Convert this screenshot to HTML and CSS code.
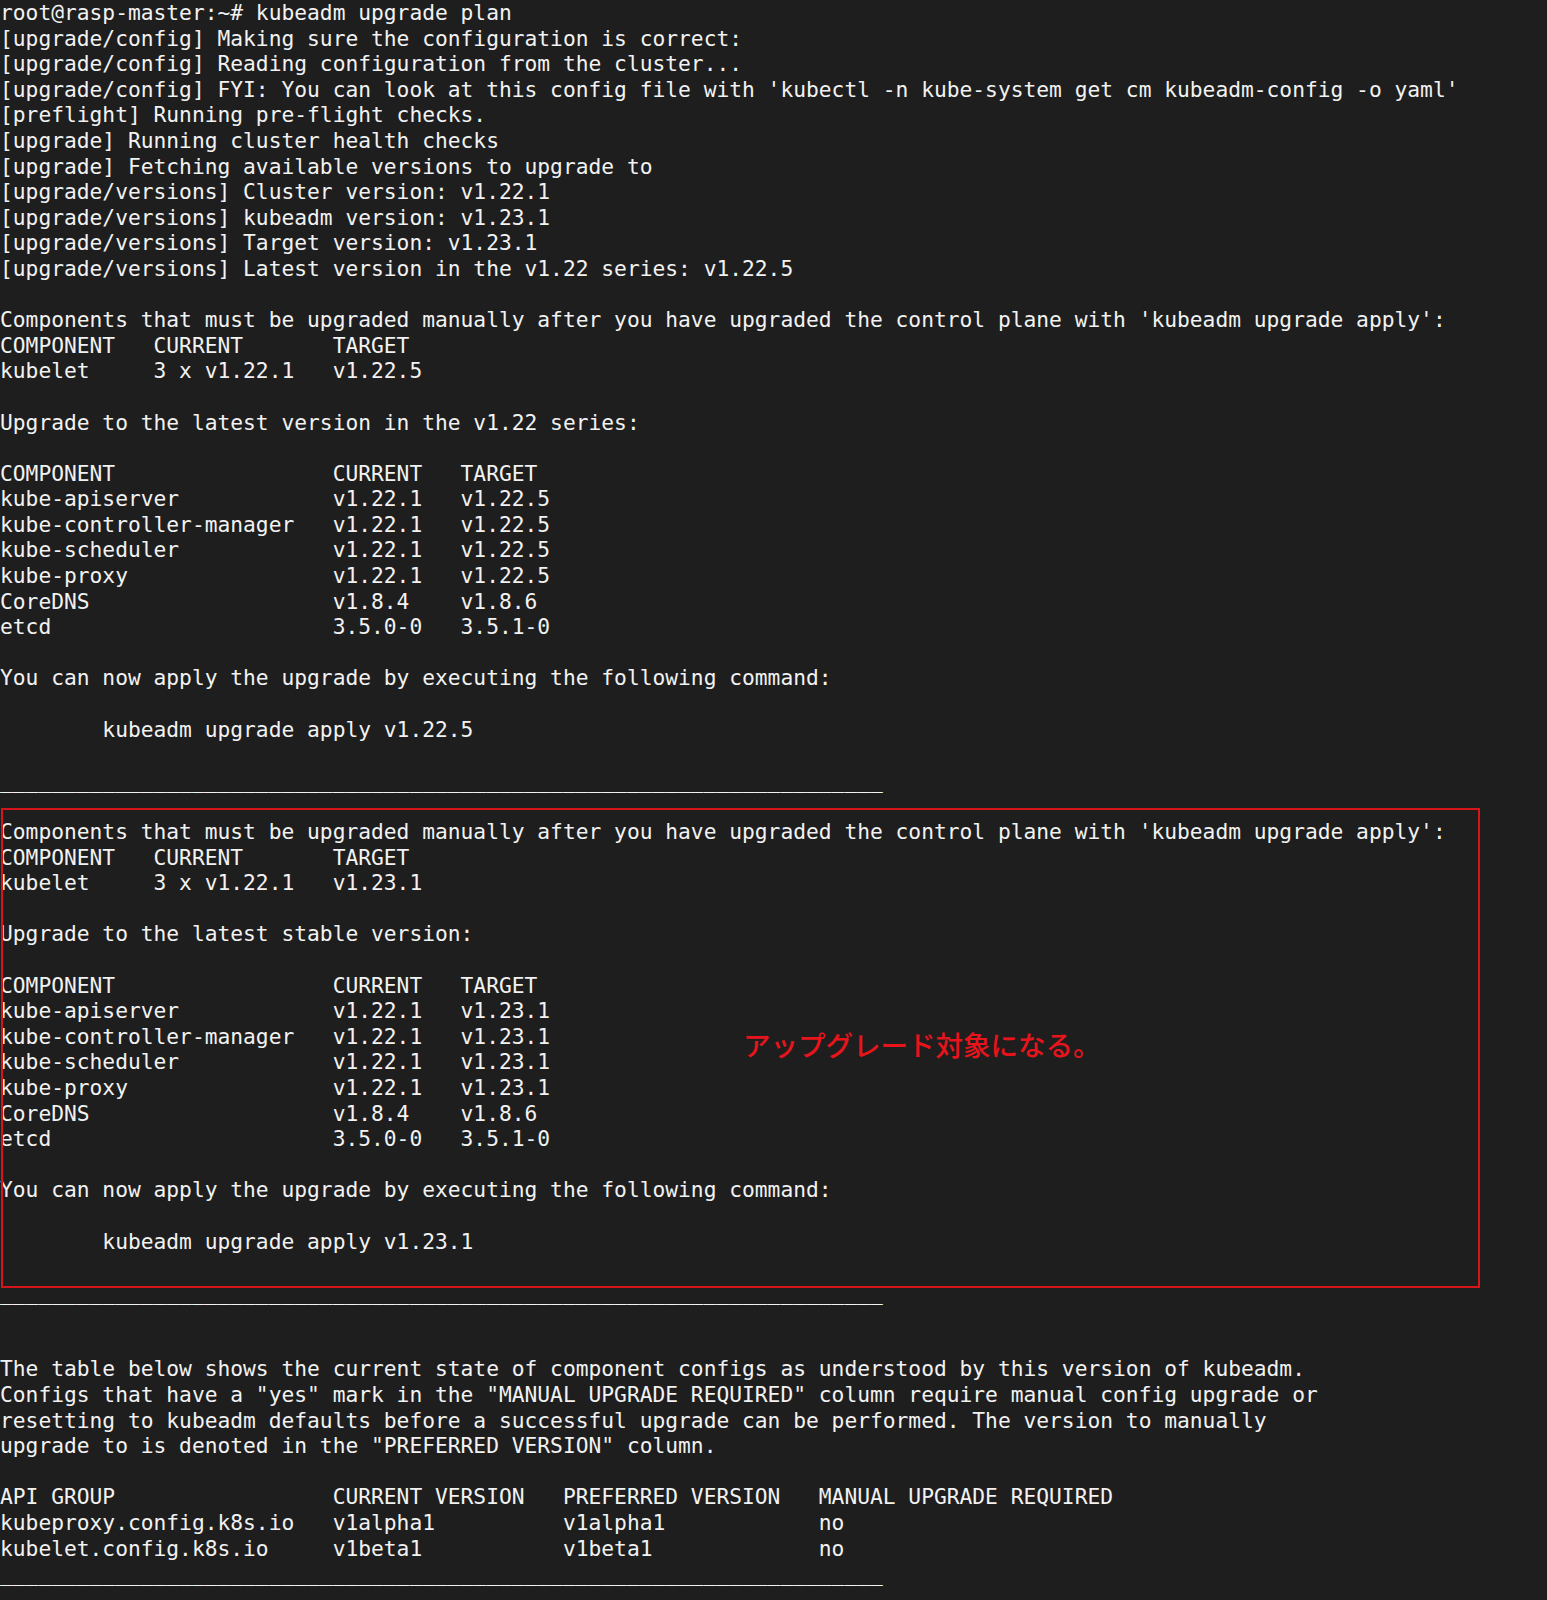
FILE: index.html
```html
<!DOCTYPE html>
<html lang="ja">
<head>
<meta charset="utf-8">
<title>kubeadm upgrade plan</title>
<link rel="stylesheet" href="styles.css">
</head>
<body>
<main class="terminal">
<pre class="output">root@rasp-master:~# kubeadm upgrade plan
[upgrade/config] Making sure the configuration is correct:
[upgrade/config] Reading configuration from the cluster...
[upgrade/config] FYI: You can look at this config file with 'kubectl -n kube-system get cm kubeadm-config -o yaml'
[preflight] Running pre-flight checks.
[upgrade] Running cluster health checks
[upgrade] Fetching available versions to upgrade to
[upgrade/versions] Cluster version: v1.22.1
[upgrade/versions] kubeadm version: v1.23.1
[upgrade/versions] Target version: v1.23.1
[upgrade/versions] Latest version in the v1.22 series: v1.22.5

Components that must be upgraded manually after you have upgraded the control plane with 'kubeadm upgrade apply':
COMPONENT   CURRENT       TARGET
kubelet     3 x v1.22.1   v1.22.5

Upgrade to the latest version in the v1.22 series:

COMPONENT                 CURRENT   TARGET
kube-apiserver            v1.22.1   v1.22.5
kube-controller-manager   v1.22.1   v1.22.5
kube-scheduler            v1.22.1   v1.22.5
kube-proxy                v1.22.1   v1.22.5
CoreDNS                   v1.8.4    v1.8.6
etcd                      3.5.0-0   3.5.1-0

You can now apply the upgrade by executing the following command:

        kubeadm upgrade apply v1.22.5

_____________________________________________________________________

Components that must be upgraded manually after you have upgraded the control plane with 'kubeadm upgrade apply':
COMPONENT   CURRENT       TARGET
kubelet     3 x v1.22.1   v1.23.1

Upgrade to the latest stable version:

COMPONENT                 CURRENT   TARGET
kube-apiserver            v1.22.1   v1.23.1
kube-controller-manager   v1.22.1   v1.23.1
kube-scheduler            v1.22.1   v1.23.1
kube-proxy                v1.22.1   v1.23.1
CoreDNS                   v1.8.4    v1.8.6
etcd                      3.5.0-0   3.5.1-0

You can now apply the upgrade by executing the following command:

        kubeadm upgrade apply v1.23.1

_____________________________________________________________________


The table below shows the current state of component configs as understood by this version of kubeadm.
Configs that have a "yes" mark in the "MANUAL UPGRADE REQUIRED" column require manual config upgrade or
resetting to kubeadm defaults before a successful upgrade can be performed. The version to manually
upgrade to is denoted in the "PREFERRED VERSION" column.

API GROUP                 CURRENT VERSION   PREFERRED VERSION   MANUAL UPGRADE REQUIRED
kubeproxy.config.k8s.io   v1alpha1          v1alpha1            no
kubelet.config.k8s.io     v1beta1           v1beta1             no
_____________________________________________________________________</pre>
<div class="highlight-box"></div>
<p class="annotation">アップグレード対象になる。</p>
</main>
</body>
</html>
```
FILE: styles.css
```css
html, body {
  margin: 0;
  padding: 0;
  background: #1e1e1e;
}

.terminal {
  position: relative;
  min-height: 1600px;
  background: #1e1e1e;
}

.output {
  margin: 0;
  padding: 0;
  font-family: "DejaVu Sans Mono", "Liberation Mono", monospace;
  font-size: 21.25px;
  line-height: 25.6px;
  color: #f2f2f2;
  white-space: pre;
}

.highlight-box {
  position: absolute;
  left: 1px;
  top: 808px;
  width: 1475px;
  height: 476px;
  border: 2px solid #d8141b;
}

.annotation {
  position: absolute;
  left: 743px;
  top: 1029px;
  margin: 0;
  font-family: "Noto Sans CJK JP", "Noto Sans", sans-serif;
  font-size: 27.5px;
  font-weight: 500;
  line-height: 30px;
  color: #e8141c;
  white-space: nowrap;
}
```
